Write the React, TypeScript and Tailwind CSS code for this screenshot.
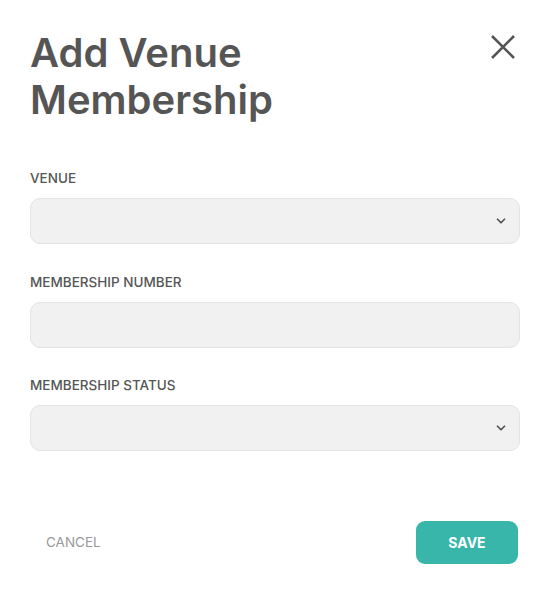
import { ChevronDown } from 'lucide-react'

const fields = [
  { label: 'VENUE', kind: 'select' },
  { label: 'MEMBERSHIP NUMBER', kind: 'input' },
  { label: 'MEMBERSHIP STATUS', kind: 'select' },
]

export default function App() {
  return (
    <div className="w-[550px] h-[591px] bg-white px-[30px] pt-[29px] font-['Inter',sans-serif] text-[#555]">
      {/* Header */}
      <div className="flex items-start justify-between">
        <h1 className="text-[40px] leading-[47px] font-semibold text-[#555]">
          Add Venue
          <br />
          Membership
        </h1>
        <button className="mt-[6px] mr-[5px] text-[#555]">
          <svg width="24" height="24" viewBox="0 0 24 24" fill="none" stroke="currentColor" strokeWidth="2.6" strokeLinecap="butt">
            <path d="M1 1L23 23M23 1L1 23" />
          </svg>
        </button>
      </div>

      {/* Fields */}
      <div className="mt-[47px] flex flex-col gap-[29.5px]">
        {fields.map((f) => (
          <div key={f.label}>
            <label className="block text-[13.5px] font-medium text-[#555] leading-[16px]">
              {f.label}
            </label>
            <div className="mt-[12px] relative h-[46px] rounded-[10px] bg-[#f1f1f1] border border-[#e4e4e4]">
              {f.kind === 'select' && (
                <ChevronDown
                  className="absolute right-[11px] top-1/2 -translate-y-1/2 w-[14px] h-[14px] text-[#555]"
                  strokeWidth={3}
                />
              )}
            </div>
          </div>
        ))}
      </div>

      {/* Actions */}
      <div className="mt-[70px] flex items-center justify-between">
        <button className="ml-[16px] text-[13.5px] text-[#999]">CANCEL</button>
        <button className="mr-[2px] w-[102px] h-[43px] rounded-[9px] bg-[#38b6aa] text-white text-[14px] font-bold">
          SAVE
        </button>
      </div>
    </div>
  )
}
